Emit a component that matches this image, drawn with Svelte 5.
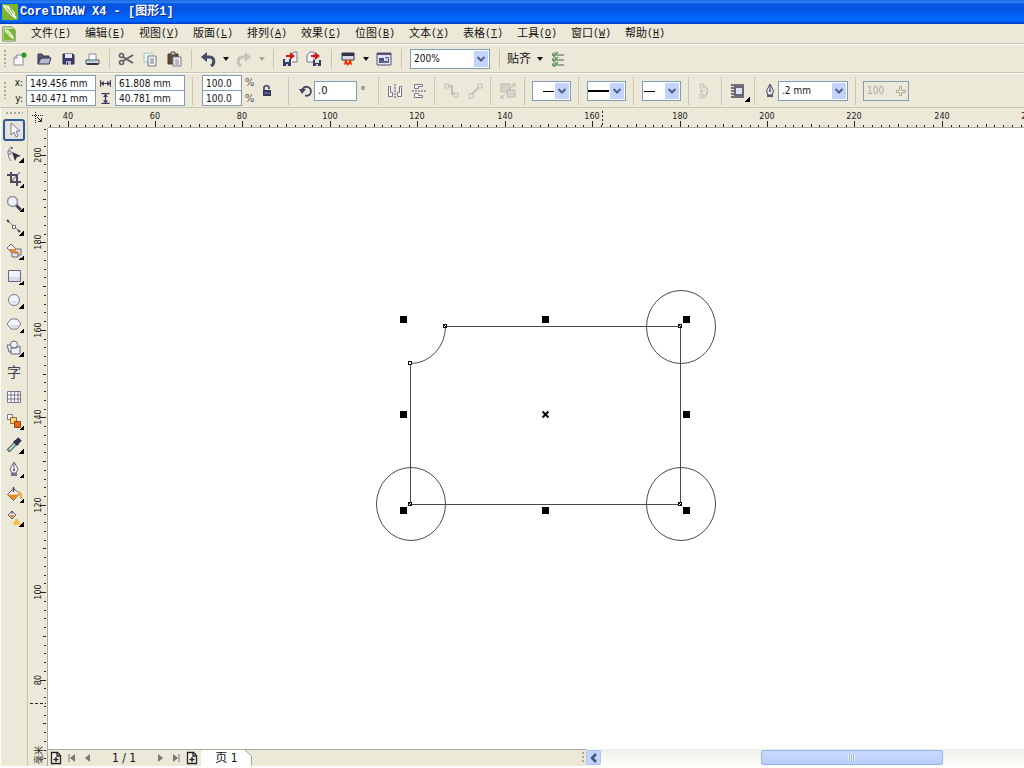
<script lang="ts">
	const menus = [
		['文件', 'F'], ['编辑', 'E'], ['视图', 'V'], ['版面', 'L'], ['排列', 'A'], ['效果', 'C'],
		['位图', 'B'], ['文本', 'X'], ['表格', 'T'], ['工具', 'O'], ['窗口', 'W'], ['帮助', 'H']
	];

	const tools = [
		{ id: 'pick', label: '挑选工具' },
		{ id: 'shape', label: '形状工具', more: true },
		{ id: 'crop', label: '裁剪工具', more: true },
		{ id: 'zoom', label: '缩放工具', more: true },
		{ id: 'freehand', label: '手绘工具', more: true },
		{ id: 'smart', label: '智能填充', more: true },
		{ id: 'rect', label: '矩形工具', more: true },
		{ id: 'ellipse', label: '椭圆形工具', more: true },
		{ id: 'polygon', label: '多边形工具', more: true },
		{ id: 'basic', label: '基本形状', more: true },
		{ id: 'text', label: '文本工具' },
		{ id: 'table', label: '表格工具' },
		{ id: 'blend', label: '交互式调和工具', more: true },
		{ id: 'dropper', label: '滴管工具', more: true },
		{ id: 'outline', label: '轮廓工具', more: true },
		{ id: 'fill', label: '填充工具', more: true },
		{ id: 'ifill', label: '交互式填充工具', more: true }
	];

	const icons: Record<string, string> = {
		new: '<path d="M2 14V7l3-3h6v10z" fill="#fafafd" stroke="#8a8a98"/><path d="M5 4v3H2" fill="none" stroke="#8a8a98"/><circle cx="12" cy="4" r="2.6" fill="#279a18"/>',
		open: '<path d="M2 13V3h4l1 2h6v3" fill="#555876" stroke="#33354f"/><path d="M2 13l3-6h10l-2 6z" fill="#b5bad0" stroke="#33354f"/>',
		save: '<path d="M3 3h10l1 1v9H3z" fill="#3b3c68" stroke="#2e2e55"/><path d="M5 3h7v4H5z" fill="#e6e8f6"/><path d="M6 10h5v4H6z" fill="#b4b8d4"/><path d="M7 11h1v3H7z" fill="#2e2e55"/>',
		print: '<path d="M5 9V3h7v6" fill="#fff" stroke="#8a8a94"/><path d="M2 9h13v4H2z" fill="#d8d8e0" stroke="#555564"/><path d="M3 13h11" stroke="#333344" stroke-width="2"/><path d="M4 10h8" stroke="#74c7d2"/>',
		cut: '<g fill="none" stroke="#60606c" stroke-width="1.6"><circle cx="3.5" cy="4.5" r="2"/><circle cx="3.5" cy="11.5" r="2"/><path d="M5 6l10 6M5 10l10-6" stroke-width="2"/></g>',
		copy: '<path d="M2 2h8v9H2z" fill="#e8f6f0" stroke="#a5ccc4"/><path d="M6 5h8v10H6z" fill="#f5f5fa" stroke="#777788"/><path d="M8 8h4M8 10h4M8 12h4" stroke="#777788"/>',
		paste: '<path d="M2 3h10v10H2z" fill="#604a3a" stroke="#4a382e"/><path d="M5 1h4v3H5z" fill="#c9c2b4" stroke="#5a5048"/><path d="M7 6h8v9H7z" fill="#f5f5fa" stroke="#777788"/><path d="M9 9h4M9 11h4M9 13h4" stroke="#777788"/>',
		undo: '<path d="M4 6h5c6 0 6 7 2 9" fill="none" stroke="#474a68" stroke-width="3"/><path d="M1 6l6-5v10z" fill="#474a68"/>',
		redo: '<path d="M12 6H7c-6 0-6 7-2 9" fill="none" stroke="#c4c3bb" stroke-width="3"/><path d="M15 6L9 1v10z" fill="#c4c3bb"/>',
		import: '<path d="M9 4l3-3h3v10h-5" fill="#f4f4f8" stroke="#777788"/><path d="M1 8h8v7H1z" fill="#3a3b66"/><path d="M3 8h4v3H3z" fill="#e4e5f2"/><path d="M4 13h2v2H4z" fill="#c4c6dc"/><path d="M4 4h4V1l5 4-5 4V6H4z" fill="#d41818"/>',
		export: '<path d="M1 4l3-3h4v10H1z" fill="#f4f4f8" stroke="#777788"/><path d="M7 9h8v6H7z" fill="#3a3b66"/><path d="M9 9h4v3H9z" fill="#e4e5f2"/><path d="M10 13h2v2h-2z" fill="#c4c6dc"/><path d="M5 4h4V1l5 4-5 4V6H5z" fill="#d41818"/>',
		launch: '<path d="M2 2h12v7H2z" fill="#d8d9e8" stroke="#333348"/><path d="M2 2h12v3H2z" fill="#333348"/><path d="M5 9h6l1 5-3-1-1 2-2-2-2 1z" fill="#f02810"/><path d="M7 9h2v3H7z" fill="#ffb020"/>',
		welcome: '<path d="M1 2h14v12H1z" fill="#e2e5f5" stroke="#515370"/><path d="M1 2h14v2H1z" fill="#515370"/><path d="M3 7h5v5H3z" fill="#474a70"/><path d="M4 12V8l3 2h2V6h4v6z" fill="#5b6294"/><path d="M9 7h3v3H9z" fill="#c6ccec"/>',
		options: '<g stroke="#888892"><path d="M7 4h7M7 9h7M7 14h7" stroke-width="1.500"/><path d="M3 2h3v3H3zM3 7h3v3H3zM3 12h3v3H3z" fill="#eee"/></g><path d="M2 3l2 2 4-4M2 8l2 2 4-4M2 13l2 2 4-4" fill="none" stroke="#4a9c38" stroke-width="1.300"/>',
		width: '<path d="M2 4v8M14 4v8M3 8h10" stroke="#3c3c5c" stroke-width="1.500"/><path d="M2 8l4-3v6zM14 8l-4-3v6z" fill="#3c3c5c"/>',
		height: '<path d="M3 2h10M3 14h10M8 3v10" stroke="#3c3c5c" stroke-width="1.500"/><path d="M8 2l-3 4h6zM8 14l-3-4h6z" fill="#3c3c5c"/>',
		lock: '<path d="M5 8V4q2.500-3 5 0v2" fill="none" stroke="#34365c" stroke-width="1.500"/><path d="M4 7h8v6H4z" fill="#34365c"/><path d="M5 10h6" stroke="#8287ad"/>',
		rotate: '<path d="M4 8a4.500 4.500 0 1 1 3 4.500" fill="none" stroke="#45455e" stroke-width="1.800"/><path d="M1 6h7l-4 5z" fill="#45455e"/>',
		mirrorh: '<path d="M8 1v14" stroke="#555568" stroke-dasharray="2 1"/><path d="M1.500 3.500h2v6h2v4h-4zM14.500 3.500h-2v6h-2v4h4z" fill="#fff" stroke="#777788"/>',
		mirrorv: '<path d="M1 8h14" stroke="#555568" stroke-dasharray="2 1"/><path d="M3.500 1.500h8v2h-4v2h-4zM3.500 14.500h8v-2h-4v-2h-4z" fill="#fff" stroke="#777788"/>',
		node: '<g fill="#eae8dc" stroke="#c2c0b4"><path d="M4 3h5v8h3" fill="none" stroke-width="2"/><path d="M2 1h4v4H2zM11 10h4v4h-4z"/></g>',
		line: '<g fill="#eae8dc" stroke="#c2c0b4"><path d="M4 12l9-9" stroke-width="2"/><path d="M2 11h4v4H2zM11 1h4v4h-4z"/></g>',
		order: '<g fill="#d5d3cb" stroke="#bbb9ae"><path d="M1 1h9v8H1z"/><path d="M7 7h8v7H7z"/><path d="M11 5l4-4m0 3V1h-3M5 11l-4 4m0-3v3h3" fill="none"/></g>',
		close: '<path d="M5 3h3q5 5 0 10H5" fill="none" stroke="#c2c0b4" stroke-width="1.500"/><path d="M3 1h3v4H3zM3 11h3v4H3zM4 6v4M3 8h5" fill="#eae8dc" stroke="#c2c0b4"/>',
		wrap: '<path d="M1 2h13M1 5h4M1 8h4M1 11h4M1 14h13" stroke="#4a4a54" stroke-width="1.500"/><path d="M5 4h8v8H5z" fill="#dfe0f2" stroke="#666678" stroke-width="2"/>',
		pen: '<path d="M8 1l3.500 7-1.500 4H6L4.500 8z" fill="#e8e9f4" stroke="#444458"/><path d="M8 2v6" stroke="#444458"/><circle cx="8" cy="8" r="1" fill="#444458"/><path d="M5 12h6v2H5z" fill="#5b5b70"/>',
		pick: '<path d="M5 1v12l3-3 2 5 2-1-2-5h4z" fill="#fff" stroke="#777c98"/>',
		shape: '<path d="M5 1C1 5 2 12 5 15" fill="none" stroke="#777790"/><path d="M2 5h3v3H2z" fill="#eee" stroke="#777790"/><path d="M5 1h2v2H5z" fill="#777790"/><path d="M6 6l9 4-4 1-2 4z" fill="#2d3048"/>',
		crop: '<path d="M5 1v10h10M1 4h10v11" fill="none" stroke="#4b4b62" stroke-width="2"/><path d="M4 12l10-11" stroke="#4b4b62"/>',
		zoom: '<path d="M9 9l6 6" stroke="#444458" stroke-width="3"/><circle cx="6.500" cy="6.500" r="5" fill="#eef0fc" stroke="#9295a8" stroke-width="1.500"/>',
		freehand: '<path d="M2 2l12 11" stroke="#7b7b90"/><path d="M1 1l2 2M12 11l2 2" stroke="#444458" stroke-width="2"/><path d="M6.500 6.500h3v3h-3z" fill="#fff" stroke="#666678"/>',
		smart: '<path d="M1 5l4-4 5 5-4 4z" fill="#f6f6fb" stroke="#666678"/><path d="M2 6h7l-3 3z" fill="#e58428"/><path d="M9 6h6v6H9z" fill="#e3e4f4" stroke="#666678"/><path d="M6 9h6v5H6z" fill="#e3e4f4" stroke="#666678"/><path d="M8 6h2v3h3v2H8z" fill="#f4852b"/>',
		rect: '<path d="M2.500 2.500h12v11h-12z" fill="#f0f1fb" stroke="#666678"/><path d="M3 9h11v4H3z" fill="#d9dbec"/>',
		ellipse: '<circle cx="8" cy="8" r="5.500" fill="#f3f4fc" stroke="#77778c"/><path d="M4 9h8q-4 5-8 0" fill="#dcdeed"/>',
		polygon: '<path d="M5 3h6l4 5-4 5H5L1 8z" fill="#f3f4fc" stroke="#77778c"/><path d="M3 9h10l-2 3H5z" fill="#d9dbec"/>',
		basic: '<path d="M1 5h4l3 3v4H3z" fill="#e6e7f4" stroke="#666678"/><circle cx="8" cy="4.500" r="3.500" fill="#f3f4fc" stroke="#666678"/><path d="M5 8h5l4-2v8H5z" fill="#eceefa" stroke="#666678"/>',
		table: '<path d="M2 2h12v11H2z" fill="#fff"/><path d="M1.500 2.500h13v11h-13zM1.500 6h13M1.500 10h13M5 2v11M8.500 2v11M12 2v11" fill="none" stroke="#777790"/>',
		blend: '<path d="M1.500 1.500h5v5h-5z" fill="#fff" stroke="#777790"/><path d="M4.500 4.500h6v6h-6z" fill="#fdd072" stroke="#8d6d40"/><path d="M8.500 8.500h6v6h-6z" fill="#ef6516" stroke="#994510"/>',
		dropper: '<path d="M2 14l7-7" stroke="#49665f" stroke-width="4"/><path d="M3 13l6-6" stroke="#b2ded2" stroke-width="2"/><path d="M8 4l4 4" stroke="#333348" stroke-width="3"/><path d="M10 6l4-4" stroke="#333348" stroke-width="5"/>',
		outline: '<path d="M8 1l4 7-2 4H6L4 8z" fill="#f5f5fb" stroke="#666678"/><path d="M8 2v7" stroke="#666678"/><circle cx="8" cy="9" r="1" fill="#444"/><path d="M5 12h6v3H5z" fill="#757589"/>',
		fill: '<path d="M1.500 8.500l6-6 6 5-6 7z" fill="#fff" stroke="#556"/><path d="M2 8.500h11L7.500 14z" fill="#f08a1c"/><path d="M7.500 1v5" stroke="#445" stroke-width="1.500"/><path d="M12 6q4 1 3 7" fill="none" stroke="#f5a030" stroke-width="2"/>',
		ifill: '<path d="M2 5l4-4 4 4-4 4z" fill="#e9eaf4" stroke="#606070"/><path d="M3 5h6L6 8z" fill="#e58428"/><path d="M6 1v3" stroke="#445"/><path d="M7 15l1-4h5l2 4z" fill="#ffc13d"/><path d="M9 9h3v2H9z" fill="#f6b560"/>',
		addpage: '<path d="M3.500 2.500h6l3 3v8h-9z" fill="#f6f5ec" stroke="#222" stroke-width="1.300"/><path d="M9 3v3h3M8 7v5M5.500 9.500h5" fill="none" stroke="#222" stroke-width="1.300"/>',
		first: '<path d="M5 4v8" stroke="#777"/><path d="M11 4v8L6 8z" fill="#777"/>',
		prev: '<path d="M10 4v8L5 8z" fill="#777"/>',
		next: '<path d="M6 4v8l5-4z" fill="#777"/>',
		last: '<path d="M11 4v8" stroke="#777"/><path d="M5 4v8l5-4z" fill="#777"/>'
	};

	// ruler scale in pixels per millimetre
	const scale = 4.372;

	function ticks(from: number, end: number, step: number, place: (mm: number) => number) {
		const out = [];
		for (let mm = from; place(mm) < end; mm += step) {
			out.push({ mm, pos: Math.round(place(mm)), size: mm % 20 === 0 ? 6 : mm % 10 === 0 ? 3 : 2 });
		}
		return out;
	}

	let innerWidth = $state(1024);
	let innerHeight = $state(768);

	// the rulers start at 48px and 128px, the unit label takes the foot of the left one
	const across = $derived(ticks(36, innerWidth - 40, 2, (mm) => (mm - 40) * scale + 19.5));
	const down = $derived(ticks(206, innerHeight - 130, -2, (mm) => (200 - mm) * scale + 27));

	const circles = [[633, 199], [363, 376], [633, 376]];
	const nodes = [[397, 198], [632, 198], [362, 235], [362, 376], [632, 376]];
	const handles = [[355, 191], [497, 191], [638, 191], [355, 286], [638, 286], [355, 382], [497, 382], [638, 382]];

	let zoom = $state('200%');
	let tool = $state('pick');
	let x = $state('149.456 mm');
	let y = $state('140.471 mm');
	let w = $state('61.808 mm');
	let h = $state('40.781 mm');
	let scroll = { start: 37.8, size: 43 };
</script>

<svelte:window bind:innerWidth bind:innerHeight />

{#snippet icon(name: string)}
	<svg class="icon" viewBox="0 0 16 16" aria-hidden="true">{@html icons[name]}</svg>
{/snippet}

{#snippet btn(name: string, label: string, disabled = false)}
	<button class="btn" aria-label={label} {disabled}>{@render icon(name)}</button>
{/snippet}

{#snippet caret(label: string, disabled = false)}
	<button class="caret" aria-label={label} {disabled}>
		<svg width="6" height="4" viewBox="0 0 6 4"><path d="M0 0h6L3 4z" fill="currentColor" /></svg>
	</button>
{/snippet}

{#snippet drop()}
	<svg class="drop" viewBox="0 0 14 16" aria-hidden="true">
		<rect width="14" height="16" rx="1" fill="#c3d3fd" />
		<path d="M3.500 6l3.500 3.500L10.500 6" fill="none" stroke="#4d6185" stroke-width="2" />
	</svg>
{/snippet}

{#snippet logo()}
	<rect width="16" height="16" fill="#7cb52c" />
	<path d="M1 1l6 1 6 7v5l-5-3-5-5z" fill="#fff" />
	<path d="M4 3l6 8M7 3l5 7M2 4l6 7" stroke="#7cb52c" />
	<path d="M11 11l3 3" stroke="#fff" stroke-width="2" />
{/snippet}

<div class="app">
	<header class="title">
		<svg width="16" height="16" viewBox="0 0 16 16">{@render logo()}</svg>
		<h1>CorelDRAW X4 - [图形1]</h1>
	</header>

	<nav class="menu">
		<svg class="doc" width="14" height="16" viewBox="0 0 16 18">
			<path d="M1 1h10l4 4v12H1z" fill="#fff" stroke="#4d7a24" />
			<g transform="translate(2 3) scale(.8)">{@render logo()}</g>
		</svg>
		{#each menus as [name, key]}
			<button>{name}<span>(<u>{key}</u>)</span></button>
		{/each}
	</nav>

	<div class="bar standard">
		<i class="grip"></i>
		{@render btn('new', '新建')}
		{@render btn('open', '打开')}
		{@render btn('save', '保存')}
		{@render btn('print', '打印')}
		<i class="sep"></i>
		{@render btn('cut', '剪切')}
		{@render btn('copy', '复制')}
		{@render btn('paste', '粘贴')}
		<i class="sep"></i>
		{@render btn('undo', '撤消')}
		{@render caret('撤消列表')}
		{@render btn('redo', '重做', true)}
		{@render caret('重做列表', true)}
		<i class="sep"></i>
		{@render btn('import', '导入')}
		{@render btn('export', '导出')}
		<i class="sep"></i>
		{@render btn('launch', '应用程序启动器')}
		{@render caret('启动器列表')}
		{@render btn('welcome', '欢迎屏幕')}
		<i class="sep"></i>
		<span class="combo zoom">
			<select aria-label="缩放级别" bind:value={zoom}>
				<option>200%</option>
				<option>100%</option>
				<option>50%</option>
			</select>
			{@render drop()}
		</span>
		<i class="sep"></i>
		<button class="snap">贴齐</button>
		{@render caret('贴齐选项')}
		{@render btn('options', '选项')}
	</div>

	<div class="bar props">
		<i class="grip"></i>
		<div class="group geometry">
			<label for="px">x:</label><input id="px" bind:value={x} />
			<label for="pw" aria-label="宽度">{@render icon('width')}</label><input id="pw" bind:value={w} />
			<label for="py">y:</label><input id="py" bind:value={y} />
			<label for="ph" aria-label="高度">{@render icon('height')}</label><input id="ph" bind:value={h} />
		</div>
		<div class="group">
			<div class="factors">
				<input id="sx" value="100.0" /><label for="sx">%</label>
				<input id="sy" value="100.0" /><label for="sy">%</label>
			</div>
			{@render btn('lock', '锁定比率')}
		</div>
		<div class="group">
			<label class="rot" for="angle" aria-label="旋转角度">{@render icon('rotate')}</label>
			<input id="angle" class="angle" value=".0" />
			<span class="degree">°</span>
		</div>
		<div class="group">
			{@render btn('mirrorh', '水平镜像')}
			{@render btn('mirrorv', '垂直镜像')}
		</div>
		<div class="group">
			{@render btn('node', '节点', true)}
			{@render btn('line', '直线', true)}
		</div>
		<div class="group">{@render btn('order', '顺序', true)}</div>
		{#each ['起始箭头', '轮廓样式', '终止箭头'] as name, i}
			<div class="group">
				<span class="combo style">
					<select aria-label={name}><option></option></select>
					<svg class="stroke" viewBox="0 0 22 16" aria-hidden="true">
						<path d={['M10 8.500h11', 'M0 8h21', 'M1 8.500h11'][i]} stroke="#000" stroke-width={i === 1 ? 2 : 1} />
					</svg>
					{@render drop()}
				</span>
			</div>
		{/each}
		<div class="group">{@render btn('close', '自动闭合曲线', true)}</div>
		<div class="group wrap">{@render btn('wrap', '段落文本换行')}<i class="more"></i></div>
		<div class="group">
			<label class="rot" for="outline" aria-label="轮廓宽度">{@render icon('pen')}</label>
			<span class="combo outline">
				<select id="outline"><option>.2 mm</option><option>.5 mm</option></select>
				{@render drop()}
			</span>
		</div>
		<div class="group">
			<span class="combo smooth">
				<input aria-label="平滑度" value="100" disabled />
				<svg class="slider" viewBox="0 0 10 10" aria-hidden="true">
					<path d="M.5 4.500h3v-4h2v4h4v2h-4v3h-2v-3h-3z" fill="#f2f0e6" stroke="#aaa899" />
				</svg>
			</span>
		</div>
	</div>

	<main>
		<aside>
			<i class="dots"></i>
			<div class="tools">
				{#each tools as t}
					<button class="tool" class:active={tool === t.id} aria-label={t.label} onclick={() => (tool = t.id)}>
						{#if t.id === 'text'}
							<span class="zi">字</span>
						{:else}
							{@render icon(t.id)}
						{/if}
						{#if t.more}<i class="more"></i>{/if}
					</button>
				{/each}
			</div>
		</aside>

		<div class="origin">
			<svg width="12" height="12" viewBox="0 0 12 12">
				<path d="M0 3.500h12M3.500 0v12" stroke="#222" stroke-dasharray="1 1" />
				<path d="M5 5l4 4M9.500 6v3.500H6" fill="none" stroke="#222" />
			</svg>
		</div>

		<svg class="ruler top" aria-hidden="true">
			{#each across as t}
				<rect x={t.pos} y={19 - t.size} width="1" height={t.size} />
				{#if t.mm % 20 === 0}<text x={t.pos} y="11">{t.mm}</text>{/if}
			{/each}
			<path d="M554.500 3v16" stroke="#222" stroke-dasharray="2 2" />
		</svg>

		<svg class="ruler left" aria-hidden="true">
			{#each down as t}
				<rect x={18 - t.size} y={t.pos} width={t.size} height="1" />
				{#if t.mm % 20 === 0}<text transform="translate(13 {t.pos}) rotate(-90)">{t.mm}</text>{/if}
			{/each}
			<path d="M2 575.500h16" stroke="#222" stroke-dasharray="3 2" />
			<text class="unit" transform="translate(14 {innerHeight - 141}) rotate(-90)">毫米</text>
		</svg>

		<svg class="canvas" role="img" aria-label="绘图窗口">
			<g fill="none" stroke="#4a4a4a">
				<path d="M397.500 198.500H632.500V376.500H362.500V235.500A35 37 0 0 0 397.500 198.500" />
				{#each circles as [cx, cy]}
					<ellipse {cx} {cy} rx="34.500" ry="36.500" />
				{/each}
			</g>
			{#each nodes as [cx, cy], i}
				<rect x={cx - 1.5} y={cy - 1.5} width="3" height="3" fill="#fff" stroke="#111" />
				{#if i !== 2}<path d="M{cx - 1} {cy - 1}l2 2" stroke="#111" />{/if}
			{/each}
			{#each handles as [cx, cy]}
				<rect x={cx - 3} y={cy - 3} width="7" height="7" />
			{/each}
			<path d="M494.500 283.500l6 6M500.500 283.500l-6 6" stroke="#000" stroke-width="2" />
		</svg>

		<footer>
			<div class="pages">
				{@render btn('addpage', '在前面添加页')}
				{@render btn('first', '首页')}
				{@render btn('prev', '上一页')}
				<span class="count">1 / 1</span>
				{@render btn('next', '下一页')}
				{@render btn('last', '末页')}
				{@render btn('addpage', '在后面添加页')}
				<button class="tab">
					<svg viewBox="0 0 51 16" aria-hidden="true"><path d="M0 0H44L50.500 6V16H0z" fill="#fff" /><path d="M44 0l6.500 6v10" fill="none" stroke="#aaa899" /></svg>
					<span>页 1</span>
				</button>
				<i class="grip"></i>
			</div>
			<div class="scrollbar">
				<button aria-label="向左滚动">
					<svg width="8" height="10" viewBox="0 0 8 10"><path d="M6 1L2 5l4 4" fill="none" stroke="#42567c" stroke-width="2.500" /></svg>
				</button>
				<div class="track">
					<div class="thumb" style="margin-left: {scroll.start}%; width: {scroll.size}%"><i></i></div>
				</div>
			</div>
		</footer>
	</main>
</div>

<style>
	:global(body) { margin: 0; background: #fff; }
	.app {
		--face: #ece9d8; --edge: #7f9db9; --line: #c9c6b6;
		min-height: 100vh; box-sizing: border-box; padding-bottom: 2px;
		display: flex; flex-direction: column; overflow: hidden;
		font: 10px/12px "DejaVu Sans Condensed", "Noto Sans CJK SC", sans-serif; color: #111;
	}
	button, input, select { font: inherit; color: inherit; margin: 0; padding: 0; box-sizing: border-box; }
	button { border: 0; background: none; display: flex; align-items: center; justify-content: center; }
	.icon { width: 16px; height: 16px; display: block; flex: none; }

	.title {
		height: 24px; display: flex; align-items: center; gap: 2px; padding-left: 2px; box-sizing: border-box;
		background: linear-gradient(#1c63d8, #2b84f8 2px, #0556e0 4px, #0553e2 10px, #0468ff 18px, #0466fb 21px, #0238c0);
	}
	h1 {
		margin: 0; color: #fff; text-shadow: 1px 1px #0a2a88;
		font: bold 12px/16px "Liberation Mono", "Noto Sans CJK SC", monospace;
	}

	.menu { height: 20px; display: flex; align-items: center; background: var(--face); border-bottom: 1px solid var(--line); box-sizing: border-box; }
	.doc { margin: 0 8px 0 2px; flex: none; }
	.menu button { flex: 0 0 54px; justify-content: flex-start; padding-left: 7px; font-size: 11px; line-height: 16px; white-space: nowrap; }
	.menu span { font: 10px/16px "Liberation Mono", monospace; }

	.bar { background: var(--face); display: flex; align-items: center; box-sizing: border-box; border-top: 1px solid #fff; border-bottom: 1px solid var(--line); }
	.standard { height: 29px; }
	.props { height: 35px; }
	.grip {
		width: 2px; height: 17px; margin: 0 2px 0 4px; flex: none;
		background: repeating-linear-gradient(#aaa89a 0 2px, transparent 2px 4px);
	}
	.sep { width: 1px; height: 20px; margin: 0 4px 0 5px; background: var(--line); flex: none; }
	.btn { width: 24px; height: 22px; flex: none; }
	.caret { width: 12px; height: 22px; flex: none; }
	.caret:disabled { color: #aaa899; }
	.snap { width: 30px; font-size: 12px; line-height: 16px; }

	input { height: 16px; border: 1px solid var(--edge); background: #fff; padding-left: 3px; width: 100%; min-width: 0; border-radius: 0; }
	.combo { position: relative; display: block; height: 20px; flex: none; }
	.combo select {
		appearance: none; width: 100%; height: 20px; border: 1px solid var(--edge); border-radius: 0;
		background: #fff; padding-left: 3px;
	}
	.combo .drop { position: absolute; right: 2px; top: 2px; width: 14px; height: 16px; pointer-events: none; }
	.zoom { width: 80px; margin: 0 4px; }
	.style { width: 39px; }
	.stroke { position: absolute; left: 1px; top: 2px; width: 22px; height: 16px; pointer-events: none; }
	.outline { width: 70px; }
	.smooth { width: 46px; }
	.smooth input { height: 20px; background: var(--face); color: #aaa899; }
	.slider { position: absolute; right: 3px; top: 5px; width: 10px; height: 10px; }

	.props {
		display: grid; grid-template-columns: 8px 184px 96px 90px 56px 56px 34px 54px 55px 55px 33px 33px 101px auto;
		justify-content: start;
	}
	.group { height: 28px; display: flex; align-items: center; justify-content: center; border-left: 1px solid var(--line); box-sizing: border-box; }
	.group.geometry { height: auto; display: grid; grid-template-columns: 15px 70px 13px 70px; column-gap: 3px; justify-content: start; border: 0; }
	.geometry label { text-align: right; overflow: hidden; }
	.geometry .icon { width: 13px; height: 13px; }
	.geometry input:nth-of-type(n + 3), .factors input:nth-of-type(2) { margin-top: -1px; }
	.factors { display: grid; grid-template-columns: 40px 10px; column-gap: 3px; align-items: center; }
	.factors label { color: #555; font-size: 11px; }
	.group .btn { width: 24px; }
	.group input.angle { width: 43px; height: 20px; font-size: 11px; }
	.group:last-child { padding-left: 7px; }
	.degree { width: 12px; text-align: center; font-size: 12px; color: #555; }
	.wrap { position: relative; }
	.more {
		position: absolute; right: 4px; bottom: 3px; width: 5px; height: 5px;
		background: linear-gradient(135deg, transparent 50%, #000 50%);
	}

	main {
		flex: 1; display: grid; padding-left: 1px; min-width: 0;
		grid-template: 20px 1fr 17px / 27px 20px 1fr;
	}
	aside { grid-row: 1 / -1; background: var(--face); border-right: 1px solid var(--line); }
	.dots { display: block; width: 17px; height: 2px; margin: 4px 0 4px 5px; background: repeating-linear-gradient(90deg, #aaa89a 0 2px, transparent 2px 4px); }
	.tools { height: 412px; display: grid; grid-template-rows: repeat(17, 1fr); align-items: center; justify-items: center; }
	.tool { position: relative; width: 22px; height: 22px; border: 1px solid transparent; border-radius: 3px; }
	.tool.active { border: 2px solid #2d5a94; background: #e3e2dc; }
	.tool .more { right: 0; bottom: 1px; }
	.zi { font-size: 14px; line-height: 16px; color: #444455; }

	.origin { background: var(--face); display: flex; align-items: center; justify-content: center; }
	.ruler { background: var(--face); width: 100%; height: 100%; display: block; min-width: 0; min-height: 0; box-sizing: border-box; }
	.ruler rect { fill: #222; }
	.ruler text { font-size: 9px; text-anchor: middle; fill: #222; }
	.ruler.top { border-bottom: 1px solid #aaa899; }
	.ruler.left { grid-column: 2; grid-row: 2 / 4; border-right: 1px solid #aaa899; }
	.canvas { grid-column: 3; grid-row: 2; width: 100%; height: 100%; display: block; background: #fff; min-width: 0; min-height: 0; }

	footer { grid-column: 3; display: grid; grid-template-columns: 538px 1fr; min-width: 0; }
	.pages { display: flex; align-items: center; background: var(--face); border-top: 1px solid #aaa899; }
	.pages .btn { width: 16px; height: 16px; }
	.count { width: 56px; text-align: center; font-size: 12px; }
	.tab { position: relative; align-self: stretch; width: 51px; margin-left: 1px; font-size: 12px; }
	.tab svg { position: absolute; inset: 0; width: 51px; height: 16px; }
	.tab span { position: relative; }
	.pages .grip { margin-left: auto; height: 12px; }
	.scrollbar { display: flex; background: linear-gradient(#f0f0ea, #fefefb); min-width: 0; }
	.scrollbar button { width: 15px; height: 15px; margin: 1px 0; border-radius: 2px; background: #c3d3fd; box-shadow: inset 0 0 0 1px #b0c4f4; flex: none; }
	.track { flex: 1; min-width: 0; }
	.thumb {
		height: 15px; margin-top: 1px; box-sizing: border-box; border: 1px solid #98b4ec; border-radius: 2px;
		background: linear-gradient(#cbdafe, #b8cdfc); display: flex; align-items: center; justify-content: center;
	}
	.thumb i { width: 7px; height: 6px; background: repeating-linear-gradient(90deg, #eef4fe 0 1px, #8cb0f8 1px 2px); }
</style>
